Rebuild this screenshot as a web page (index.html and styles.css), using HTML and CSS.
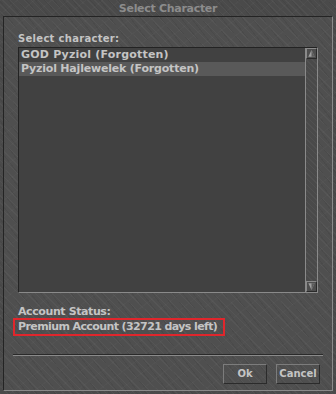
FILE: index.html
```html
<!DOCTYPE html>
<html>
<head>
<meta charset="utf-8">
<link rel="stylesheet" href="styles.css">
</head>
<body>
<div class="window">
  <div class="titlebar">Select Character</div>
  <div class="panel">
    <div class="label first">Select character:</div>
    <div class="listbox">
      <div class="rows">
        <div class="row r1">GOD Pyziol (Forgotten)</div>
        <div class="row r2 selected">Pyziol Hajlewelek (Forgotten)</div>
      </div>
      <div class="scrollbar">
        <div class="sbtn up"><svg width="9" height="9" viewBox="0 0 10 10"><path d="M5 1 L8.5 8.5 L1.5 8.5 Z" fill="#a0a0a0"/><path d="M5 1 L8.5 8.5 L5 8.5 Z" fill="#5c5c5c"/></svg></div>
        <div class="track"></div>
        <div class="sbtn down"><svg width="9" height="9" viewBox="0 0 10 10"><path d="M1.5 1.5 L8.5 1.5 L5 9 Z" fill="#a0a0a0"/><path d="M5 1.5 L8.5 1.5 L5 9 Z" fill="#5c5c5c"/></svg></div>
      </div>
    </div>
    <div class="label status">Account Status:</div>
    <div class="premium">Premium Account (32721 days left)</div>
    <div class="separator"></div>
    <div class="buttons">
      <div class="btn">Ok</div>
      <div class="btn">Cancel</div>
    </div>
  </div>
</div>
</body>
</html>
```

FILE: styles.css
```css
html, body {
  margin: 0;
  padding: 0;
}
body {
  width: 336px;
  height: 394px;
  overflow: hidden;
  font-family: "DejaVu Sans", Verdana, sans-serif;
  font-weight: bold;
  font-size: 11px;
  color: #c4c4c4;
}
.window {
  width: 336px;
  height: 394px;
  box-sizing: border-box;
  padding: 0 3px 3px 3px;
  background-color: #4a4a4a;
  background-image:
    repeating-linear-gradient(45deg, rgba(255,255,255,0.035) 0 1px, rgba(0,0,0,0) 1px 5px),
    repeating-linear-gradient(50deg, rgba(0,0,0,0.06) 0 1px, rgba(0,0,0,0) 1px 7px),
    repeating-linear-gradient(-40deg, rgba(255,255,255,0.02) 0 1px, rgba(0,0,0,0) 1px 11px);
  display: flex;
  flex-direction: column;
}
.titlebar {
  height: 16px;
  line-height: 17px;
  text-align: center;
  color: #8c8c8c;
  letter-spacing: -0.3px;
  flex: none;
}
.panel {
  flex: 1;
  border-top: 1px solid #242424;
  border-left: 1px solid #242424;
  border-right: 1px solid #8a8a8a;
  border-bottom: 1px solid #8a8a8a;
  background-color: #4f4f4f;
  background-image:
    repeating-linear-gradient(45deg, rgba(255,255,255,0.035) 0 1px, rgba(0,0,0,0) 1px 6px),
    repeating-linear-gradient(52deg, rgba(0,0,0,0.06) 0 1px, rgba(0,0,0,0) 1px 8px),
    repeating-linear-gradient(-38deg, rgba(255,255,255,0.02) 0 1px, rgba(0,0,0,0) 1px 13px);
  padding: 0 0 0 14px;
  display: flex;
  flex-direction: column;
}
.label {
  height: 14px;
  line-height: 14px;
}
.label.first {
  margin-top: 15px;
  font-size: 10px;
  letter-spacing: 0.3px;
}
.listbox {
  margin-top: 1px;
  width: 300px;
  height: 246px;
  box-sizing: border-box;
  border-top: 1px solid #232323;
  border-left: 1px solid #232323;
  border-right: 1px solid #8a8a8a;
  border-bottom: 1px solid #8a8a8a;
  background: #414141;
  display: flex;
}
.rows {
  flex: 1;
}
.row {
  height: 14px;
  line-height: 13px;
  padding-left: 2px;
}
.row.r1 {
  letter-spacing: 0.2px;
}
.row.r2 {
  letter-spacing: -0.2px;
}
.row.selected {
  background: #595959;
}
.scrollbar {
  width: 12px;
  flex: none;
  box-sizing: border-box;
  border-left: 1px solid #8a8a8a;
  background-color: #4a4a4a;
  background-image: repeating-linear-gradient(45deg, rgba(255,255,255,0.04) 0 1px, rgba(0,0,0,0) 1px 4px);
  display: flex;
  flex-direction: column;
}
.track {
  flex: 1;
}
.sbtn {
  height: 11px;
  box-sizing: border-box;
  border-top: 1px solid #8a8a8a;
  border-left: 1px solid #8a8a8a;
  border-right: 1px solid #2a2a2a;
  border-bottom: 1px solid #2a2a2a;
  background: #4e4e4e;
  display: flex;
  align-items: center;
  justify-content: center;
}
.label.status {
  margin-top: 12px;
  height: 13px;
  line-height: 13px;
  letter-spacing: -0.4px;
}
.premium {
  margin-left: -5px;
  width: 212px;
  height: 18px;
  box-sizing: border-box;
  border: 2px solid #e0262c;
  line-height: 14px;
  padding-left: 3px;
  letter-spacing: -0.6px;
  white-space: nowrap;
}
.separator {
  margin-top: 19px;
  margin-left: -5px;
  width: 310px;
  height: 1px;
  background: #8a8a8a;
  box-shadow: 0 -1px 0 #2a2a2a;
}
.buttons {
  margin-top: 8px;
  display: flex;
  gap: 9px;
  justify-content: flex-end;
  padding-right: 12px;
}
.btn {
  width: 44px;
  height: 20px;
  box-sizing: border-box;
  border-top: 1px solid #7c7c7c;
  border-left: 1px solid #7c7c7c;
  border-right: 1px solid #2b2b2b;
  border-bottom: 1px solid #2b2b2b;
  text-align: center;
  line-height: 18px;
  font-size: 10px;
  color: #c4c4c4;
}
```
